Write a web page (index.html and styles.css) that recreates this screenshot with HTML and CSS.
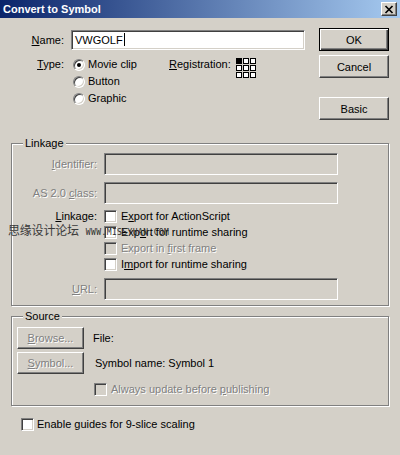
FILE: index.html
```html
<!DOCTYPE html>
<html>
<head>
    <meta charset="UTF-8">
    <title>Convert to Symbol</title>
    <link rel="stylesheet" href="styles.css">
</head>
<body>
<div class="dialog">
    <div class="titlebar">
        <span class="title">Convert to Symbol</span>
        <span class="closeBtn">
            <svg width="10" height="9" viewBox="0 0 10 9"><path d="M1.5 1 L8.5 8 M8.5 1 L1.5 8" stroke="#000" stroke-width="1.7"/></svg>
        </span>
    </div>

    <div class="content">
        <!--名称和类型-->
        <div class="top">
            <div class="props">
                <div class="propRow nameRow">
                    <span class="lbl"><u>N</u>ame:</span>
                    <div class="textbox nameBox">VWGOLF<span class="caret"></span></div>
                </div>
                <div class="propRow typeRow">
                    <span class="lbl"><u>T</u>ype:</span>
                    <ul class="radios">
                        <li><span class="radio checked"></span>Movie clip</li>
                        <li><span class="radio"></span>Button</li>
                        <li><span class="radio"></span>Graphic</li>
                    </ul>
                    <div class="reg">
                        <span><u>R</u>egistration:</span>
                        <svg width="20" height="20" viewBox="0 0 20 20">
                            <rect x="0.5" y="0.5" width="5" height="5" fill="#000" stroke="#000"/>
                            <rect x="7.5" y="0.5" width="5" height="5" fill="#fff" stroke="#000"/>
                            <rect x="14.5" y="0.5" width="5" height="5" fill="#fff" stroke="#000"/>
                            <rect x="0.5" y="7.5" width="5" height="5" fill="#fff" stroke="#000"/>
                            <rect x="7.5" y="7.5" width="5" height="5" fill="#fff" stroke="#000"/>
                            <rect x="14.5" y="7.5" width="5" height="5" fill="#fff" stroke="#000"/>
                            <rect x="0.5" y="14.5" width="5" height="5" fill="#fff" stroke="#000"/>
                            <rect x="7.5" y="14.5" width="5" height="5" fill="#fff" stroke="#000"/>
                            <rect x="14.5" y="14.5" width="5" height="5" fill="#fff" stroke="#000"/>
                        </svg>
                    </div>
                </div>
            </div>
            <div class="btns">
                <div class="btn default">OK</div>
                <div class="btn cancel">Cancel</div>
                <div class="btn basic">Basic</div>
            </div>
        </div>

        <!--Linkage-->
        <div class="group linkage">
            <div class="groupTitle">Linkage</div>
            <div class="frow">
                <span class="lbl dis"><u>I</u>dentifier:</span>
                <div class="textbox off"></div>
            </div>
            <div class="frow second">
                <span class="lbl dis">AS 2.0 <u>c</u>lass:</span>
                <div class="textbox off"></div>
            </div>
            <div class="frow check first">
                <span class="lbl"><u>L</u>inkage:</span>
                <span class="box"></span><span>E<u>x</u>port for ActionScript</span>
            </div>
            <div class="frow check">
                <span class="lbl"></span>
                <span class="box"></span><span>Exp<u>o</u>rt for runtime sharing</span>
            </div>
            <div class="frow check">
                <span class="lbl"></span>
                <span class="box off"></span><span class="dis">Export in <u>f</u>irst frame</span>
            </div>
            <div class="frow check">
                <span class="lbl"></span>
                <span class="box"></span><span>I<u>m</u>port for runtime sharing</span>
            </div>
            <div class="frow url">
                <span class="lbl dis"><u>U</u>RL:</span>
                <div class="textbox off"></div>
            </div>
        </div>

        <!--Source-->
        <div class="group source">
            <div class="groupTitle">Source</div>
            <div class="srow">
                <div class="btn small dis"><u>B</u>rowse...</div>
                <span>File:</span>
            </div>
            <div class="srow second">
                <div class="btn small dis"><u>S</u>ymbol...</div>
                <span class="symName">Symbol name: Symbol 1</span>
            </div>
            <div class="check always">
                <span class="box off"></span><span class="dis">Always update before <u>p</u>ublishing</span>
            </div>
        </div>

        <div class="check guides">
            <span class="box"></span><span>Enable guides for 9-slice scaling</span>
        </div>
    </div>

    <div class="watermark"><span class="cn">思缘设计论坛</span><span class="site">WWW.MISSYUAN.COM</span></div>
</div>
</body>
</html>
```

FILE: styles.css
```css
html, body, div, ul, li, span {
    margin: 0;
    padding: 0;
}

ul, li {
    list-style: none;
}

body {
    background: #d4d0c8;
    font-family: "Liberation Sans", Arial, sans-serif;
    font-size: 11px;
    color: #000;
}

.dialog {
    position: relative;
    width: 400px;
    height: 455px;
    overflow: hidden;
}

/*标题栏*/
.titlebar {
    display: flex;
    align-items: center;
    justify-content: space-between;
    height: 18px;
    padding: 0 3px 0 3px;
    background: linear-gradient(to right, #0a246a, #a6caf0);
}

.titlebar .title {
    color: #fff;
    font-weight: bold;
    font-size: 11px;
}

.titlebar .closeBtn {
    display: flex;
    align-items: center;
    justify-content: center;
    box-sizing: border-box;
    width: 16px;
    height: 14px;
    background: #d4d0c8;
    border: 1px solid;
    border-color: #fff #404040 #404040 #fff;
    box-shadow: inset -1px -1px #808080;
}

.content {
    padding: 10px 11px 0 11px;
}

/*通用控件*/
.textbox {
    box-sizing: border-box;
    width: 234px;
    height: 22px;
    background: #fff;
    border: 1px solid;
    border-color: #808080 #fff #fff #808080;
    box-shadow: inset 1px 1px #404040, inset -1px -1px #d4d0c8;
}

.textbox.off {
    background: #d4d0c8;
}

.btn {
    display: flex;
    align-items: center;
    justify-content: center;
    box-sizing: border-box;
    width: 70px;
    height: 23px;
    background: #d4d0c8;
    border: 1px solid;
    border-color: #fff #404040 #404040 #fff;
    box-shadow: inset -1px -1px #808080;
}

.btn.default {
    border-color: #000;
    box-shadow: inset 1px 1px #fff, inset -1px -1px #404040, inset -2px -2px #808080;
}

.dis {
    color: #808080;
    text-shadow: 1px 1px 0 #fff;
}

.check {
    display: flex;
    align-items: center;
    height: 16px;
}

.box {
    box-sizing: border-box;
    width: 13px;
    height: 13px;
    margin-right: 4px;
    background: #fff;
    border: 1px solid;
    border-color: #808080 #fff #fff #808080;
    box-shadow: inset 1px 1px #404040, inset -1px -1px #d4d0c8;
}

.box.off {
    background: #d4d0c8;
}

/*名称和类型*/
.top {
    display: flex;
    justify-content: space-between;
}

.propRow {
    display: flex;
}

.propRow .lbl {
    width: 53px;
    margin-right: 7px;
    text-align: right;
}

.nameRow {
    align-items: center;
    height: 23px;
}

.nameBox {
    height: 20px;
    display: flex;
    align-items: center;
    padding-left: 3px;
}

.caret {
    width: 1px;
    height: 13px;
    margin-left: 1px;
    background: #000;
}

.typeRow {
    margin-top: 5px;
    line-height: 17px;
}

.radios {
    width: 98px;
}

.radios li {
    display: flex;
    align-items: center;
    height: 17px;
    padding-left: 2px;
}

.radio {
    position: relative;
    box-sizing: border-box;
    width: 12px;
    height: 12px;
    margin-right: 3px;
    border-radius: 50%;
    background: #fff;
    border: 1px solid;
    border-color: #808080 #fff #fff #808080;
    box-shadow: inset 1px 1px #404040, inset -1px -1px #d4d0c8;
}

.radio.checked::after {
    content: "";
    position: absolute;
    top: 3px;
    left: 3px;
    width: 4px;
    height: 4px;
    border-radius: 50%;
    background: #000;
}

.reg {
    display: flex;
    align-items: flex-start;
}

.reg svg {
    margin: 2px 0 0 5px;
}

.btns .cancel {
    margin-top: 4px;
}

.btns .basic {
    margin-top: 19px;
}

/*分组框*/
.group {
    width: 378px;
    box-sizing: border-box;
    border: 1px solid #808080;
    box-shadow: inset 1px 1px #fff, 1px 1px #fff;
    padding: 0 5px;
}

.groupTitle {
    display: table;
    margin: -7px 0 0 6px;
    padding: 0 2px;
    line-height: 13px;
    background: #d4d0c8;
}

.linkage {
    margin-top: 23px;
    padding-bottom: 5px;
}

.frow {
    display: flex;
    align-items: center;
    height: 22px;
    margin-top: 3px;
}

.frow .lbl {
    width: 80px;
    margin-right: 7px;
    text-align: right;
}

.frow.second {
    margin-top: 7px;
}

.frow.check {
    height: 16px;
    margin-top: 0;
}

.frow.check.first {
    margin-top: 4px;
}

.frow.url {
    margin-top: 6px;
}

.source {
    margin-top: 10px;
    padding-bottom: 8px;
}

.srow {
    display: flex;
    align-items: center;
    margin-top: 4px;
}

.srow.second {
    margin-top: 3px;
}

.btn.small {
    width: 67px;
    height: 22px;
    margin-right: 9px;
}

.symName {
    margin-left: 2px;
}

.always {
    margin: 7px 0 0 77px;
}

.guides {
    margin: 10px 0 0 10px;
}

.guides .box {
    margin-right: 3px;
}

/*水印*/
.watermark {
    position: absolute;
    left: 8px;
    top: 221px;
    display: flex;
    align-items: baseline;
    color: #3a3a3a;
}

.watermark .cn {
    font-family: "Noto Sans CJK SC", sans-serif;
    font-size: 12px;
    letter-spacing: -0.2px;
}

.watermark .site {
    margin-left: 7px;
    font-family: "DejaVu Sans Mono", monospace;
    font-size: 8px;
    letter-spacing: 0.4px;
    color: #2a2a2a;
}
```
